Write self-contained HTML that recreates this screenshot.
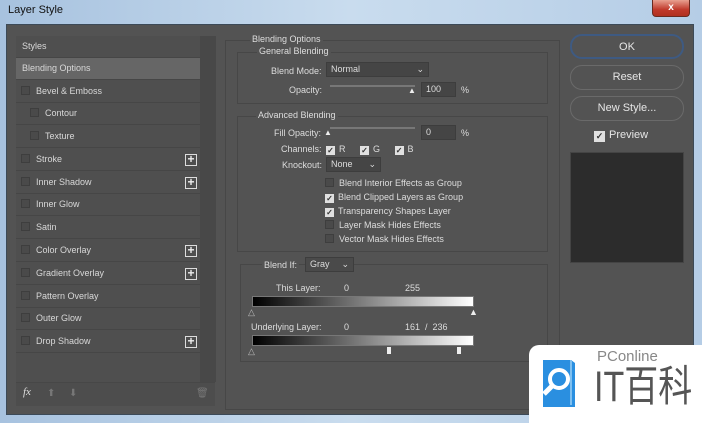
<!DOCTYPE html>
<html><head><meta charset="utf-8"><style>
*{margin:0;padding:0;box-sizing:border-box}
html{width:702px;height:423px;overflow:hidden}
body{width:702px;height:423px;overflow:hidden;position:relative;font-family:"Liberation Sans",sans-serif;font-size:9px;color:#ddd;background:linear-gradient(90deg,#a7c2df,#c9dcee 50%,#b5cde6)}
.a{position:absolute;white-space:nowrap}
.body{left:6px;top:24px;width:688px;height:391px;background:#535353;border:1px solid #3c4a58}
.title{left:8px;top:4px;font-size:11px;color:#111}
.close{left:652px;top:0;width:38px;height:17px;background:linear-gradient(#e8a090,#c0392b 60%,#b03020);border:1px solid #6a2a20;border-top:0;border-radius:0 0 4px 4px;color:#fff;font-weight:bold;font-size:10px;text-align:center;line-height:15px}
.lp{left:16px;top:36px;width:184px;height:370px;background:#4f4f4f}
.sb{left:200px;top:36px;width:16px;height:346px;background:#484848}
.it{position:absolute;left:16px;width:184px;height:22px;border-bottom:1px solid #464646;line-height:21px;color:#d8d8d8}
.cb{display:inline-block;width:9px;height:9px;border:1px solid #3e3e3e;background:#4a4a4a;vertical-align:-1px;margin-right:6px}
.pl{position:absolute;right:3px;top:5px;width:12px;height:12px;border:1px solid #ddd;color:#eee;font-size:12px;line-height:9px;text-align:center;font-weight:bold}
.grp{border:1px solid #474747;position:absolute}
.lbl{position:absolute;color:#ddd;white-space:nowrap}
.inp{position:absolute;background:#454545;border:1px solid #3d3d3d;color:#ddd;padding-left:4px;line-height:13px}
.ck{display:inline-block;width:9px;height:9px;background:#e0e0e0;color:#333;font-size:8px;line-height:9px;text-align:center;vertical-align:-1px;margin-right:4px;font-weight:bold}
.btn{position:absolute;left:570px;width:114px;height:25px;border:1px solid #6a6a6a;border-radius:12px;text-align:center;line-height:23px;font-size:11px;color:#e6e6e6}
.grad{position:absolute;left:252px;width:222px;height:11px;background:linear-gradient(90deg,#000,#fff);border:1px solid #777}
</style></head><body>
<div class="a title">Layer Style</div>
<div class="a close">x</div>
<div class="a body"></div>
<div class="a lp"></div>
<div class="a sb"></div>
<div class="it" style="top:36px;padding-left:6px">Styles</div>
<div class="it" style="top:58px;padding-left:6px;background:#666">Blending Options</div>
<div class="it" style="top:81px;padding-left:5px"><span class="cb"></span>Bevel &amp; Emboss</div>
<div class="it" style="top:103px;padding-left:14px"><span class="cb"></span>Contour</div>
<div class="it" style="top:126px;padding-left:14px"><span class="cb"></span>Texture</div>
<div class="it" style="top:149px;padding-left:5px"><span class="cb"></span>Stroke<span class="pl">+</span></div>
<div class="it" style="top:172px;padding-left:5px"><span class="cb"></span>Inner Shadow<span class="pl">+</span></div>
<div class="it" style="top:194px;padding-left:5px"><span class="cb"></span>Inner Glow</div>
<div class="it" style="top:217px;padding-left:5px"><span class="cb"></span>Satin</div>
<div class="it" style="top:240px;padding-left:5px"><span class="cb"></span>Color Overlay<span class="pl">+</span></div>
<div class="it" style="top:263px;padding-left:5px"><span class="cb"></span>Gradient Overlay<span class="pl">+</span></div>
<div class="it" style="top:286px;padding-left:5px"><span class="cb"></span>Pattern Overlay</div>
<div class="it" style="top:308px;padding-left:5px"><span class="cb"></span>Outer Glow</div>
<div class="it" style="top:331px;padding-left:5px"><span class="cb"></span>Drop Shadow<span class="pl">+</span></div>
<div class="a" style="left:16px;top:382px;width:199px;height:24px;background:#4d4d4d;border-top:1px solid #474747"></div>
<div class="a" style="left:23px;top:386px;font-style:italic;font-size:11px;color:#ddd;font-family:'Liberation Serif',serif">fx</div>
<div class="a" style="left:47px;top:388px;color:#777;font-size:10px">⬆</div>
<div class="a" style="left:69px;top:388px;color:#777;font-size:10px">⬇</div>
<div class="a" style="left:196px;top:388px;color:#777;font-size:10px">🗑</div>
<div class="grp" style="left:225px;top:40px;width:335px;height:370px"></div>
<div class="lbl" style="left:250px;top:34px;background:#535353;padding:0 2px">Blending Options</div>
<div class="grp" style="left:237px;top:52px;width:311px;height:52px"></div>
<div class="lbl" style="left:257px;top:46px;background:#535353;padding:0 2px">General Blending</div>
<div class="lbl" style="left:271px;top:66px">Blend Mode:</div>
<div class="inp" style="left:326px;top:62px;width:103px;height:15px">Normal<span style="float:right;margin-right:4px">⌄</span></div>
<div class="lbl" style="left:289px;top:85px">Opacity:</div>
<div class="a" style="left:330px;top:85px;width:85px;height:2px;background:#777"></div>
<div class="a" style="left:408px;top:86px;color:#eee;font-size:8px">▲</div>
<div class="inp" style="left:421px;top:82px;width:35px;height:15px">100</div>
<div class="lbl" style="left:461px;top:85px">%</div>
<div class="grp" style="left:237px;top:116px;width:311px;height:136px"></div>
<div class="lbl" style="left:256px;top:110px;background:#535353;padding:0 2px">Advanced Blending</div>
<div class="lbl" style="left:274px;top:128px">Fill Opacity:</div>
<div class="a" style="left:330px;top:127px;width:85px;height:2px;background:#777"></div>
<div class="a" style="left:324px;top:128px;color:#eee;font-size:8px">▲</div>
<div class="inp" style="left:421px;top:125px;width:35px;height:15px">0</div>
<div class="lbl" style="left:461px;top:128px">%</div>
<div class="lbl" style="left:281px;top:144px">Channels: <span class="ck" style="margin-left:2px">✓</span>R <span class="ck" style="margin-left:12px">✓</span>G <span class="ck" style="margin-left:12px">✓</span>B</div>
<div class="lbl" style="left:282px;top:160px">Knockout:</div>
<div class="inp" style="left:326px;top:157px;width:55px;height:15px">None<span style="float:right;margin-right:4px">⌄</span></div>
<div class="lbl" style="left:325px;top:178px"><span class="cb" style="margin-right:5px"></span>Blend Interior Effects as Group</div>
<div class="lbl" style="left:325px;top:192px"><span class="ck">✓</span>Blend Clipped Layers as Group</div>
<div class="lbl" style="left:325px;top:206px"><span class="ck">✓</span>Transparency Shapes Layer</div>
<div class="lbl" style="left:325px;top:220px"><span class="cb" style="margin-right:5px"></span>Layer Mask Hides Effects</div>
<div class="lbl" style="left:325px;top:234px"><span class="cb" style="margin-right:5px"></span>Vector Mask Hides Effects</div>
<div class="grp" style="left:240px;top:264px;width:308px;height:98px"></div>
<div class="lbl" style="left:262px;top:260px;background:#535353;padding:0 2px">Blend If:</div>
<div class="inp" style="left:305px;top:257px;width:49px;height:15px;background:#4a4a4a">Gray<span style="float:right;margin-right:4px">⌄</span></div>
<div class="lbl" style="left:276px;top:283px">This Layer:</div>
<div class="lbl" style="left:344px;top:283px">0</div>
<div class="lbl" style="left:405px;top:283px">255</div>
<div class="grad" style="top:296px"></div>
<div class="a" style="left:248px;top:307px;color:#bbb;font-size:9px">△</div>
<div class="a" style="left:469px;top:307px;color:#eee;font-size:9px">▲</div>
<div class="lbl" style="left:251px;top:322px">Underlying Layer:</div>
<div class="lbl" style="left:344px;top:322px">0</div>
<div class="lbl" style="left:405px;top:322px">161 &nbsp;/ &nbsp;236</div>
<div class="grad" style="top:335px"></div>
<div class="a" style="left:248px;top:346px;color:#bbb;font-size:9px">△</div>
<div class="a" style="left:387px;top:347px;width:4px;height:7px;background:#eee"></div>
<div class="a" style="left:457px;top:347px;width:4px;height:7px;background:#eee"></div>
<div class="btn" style="top:34px;border:2px solid #3e5a82">OK</div>
<div class="btn" style="top:65px">Reset</div>
<div class="btn" style="top:96px">New Style...</div>
<div class="a" style="left:594px;top:129px;font-size:11px;color:#e6e6e6"><span class="ck" style="width:11px;height:11px;line-height:11px;font-size:9px">✓</span>Preview</div>
<div class="a" style="left:570px;top:152px;width:114px;height:111px;background:#2c2c2c;border:1px solid #444"></div>
<div class="a" style="left:529px;top:345px;width:173px;height:78px;background:#fff;border-radius:10px 0 0 0"></div>
<svg class="a" style="left:541px;top:358px" width="36" height="50" viewBox="0 0 36 50"><path d="M2 2h28l4 3v44H2z" fill="#2a8fe0"/><path d="M30 2v45" stroke="#7fc0f0" stroke-width="2"/><circle cx="18" cy="21" r="9" fill="none" stroke="#fff" stroke-width="4"/><path d="M11 28L3 36" stroke="#fff" stroke-width="5"/></svg>
<div class="a" style="left:597px;top:348px;font-size:15px;line-height:18px;color:#888">PConline</div>
<div class="a" style="left:594px;top:364px;font-size:34px;line-height:46px;height:46px;color:#555;font-family:'Liberation Sans','Noto Sans CJK SC',sans-serif;transform:scaleY(1.25);transform-origin:0 50%">IT百科</div>
</body></html>
